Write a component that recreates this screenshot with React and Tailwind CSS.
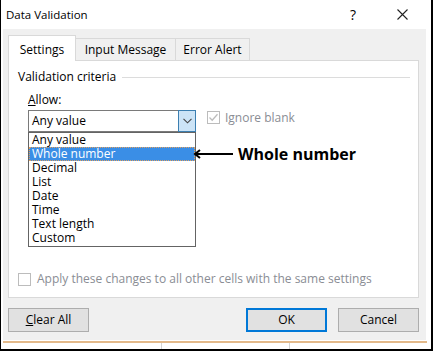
import { useState } from 'react'

const items = ['Any value', 'Whole number', 'Decimal', 'List', 'Date', 'Time', 'Text length', 'Custom']

function CheckBox({ checked }) {
  return (
    <span className="w-[13px] h-[13px] border border-[#bcbcbc] bg-white flex items-center justify-center shrink-0">
      {checked && (
        <svg width="11" height="11" viewBox="0 0 11 11" fill="none">
          <path d="M1.5 5.5 L4.2 8.2 L9.5 2.2" stroke="#bcbcbc" strokeWidth="1.3" />
        </svg>
      )}
    </span>
  )
}

export default function App() {
  const [selected] = useState(1)

  return (
    <div
      className="w-[433px] h-[351px] bg-white border-l border-r-2 border-b-2 border-black flex flex-col text-[12px] text-black overflow-hidden"
      style={{ fontFamily: '"Open Sans", "Noto Sans", sans-serif' }}
    >
      {/* title bar */}
      <div className="h-[29px] flex items-center shrink-0">
        <span className="pl-[5px] text-[11.5px]">Data Validation</span>
        <div className="ml-auto flex items-center pr-[23px]">
          <span className="text-[14px] leading-none">?</span>
          <svg className="ml-[41px]" width="11" height="11" viewBox="0 0 11 11">
            <path d="M0.5 0.5 L10.5 10.5 M10.5 0.5 L0.5 10.5" stroke="#222" strokeWidth="1.1" />
          </svg>
        </div>
      </div>

      {/* dialog body */}
      <div className="h-[311px] ml-[2px] mr-[5px] bg-[#f0f0f0] pl-[5px] pr-[7px] pt-[6px] flex flex-col">
        {/* tabs */}
        <div className="flex items-end h-[26px] -mb-px relative z-10">
          <div className="w-[68px] h-[26px] bg-white border border-b-0 border-[#d9d9d9] text-center pt-[6px] leading-[16px]">
            Settings
          </div>
          <div className="w-[101px] -ml-px h-[22px] mb-px bg-[#f0f0f0] border border-b-0 border-[#d9d9d9] text-center pt-[3px] leading-[16px]">
            Input Message
          </div>
          <div className="w-[75px] -ml-px h-[22px] mb-px bg-[#f0f0f0] border border-b-0 border-[#d9d9d9] text-center pt-[3px] leading-[16px]">
            Error Alert
          </div>
        </div>

        {/* panel */}
        <div className="h-[238px] bg-white border border-[#d9d9d9] pl-[9px] flex flex-col">
          <div className="mt-[8px] h-[16px] flex items-center">
            <span className="leading-[16px]">Validation criteria</span>
            <span className="flex-1 h-px bg-[#dcdcdc] ml-[6px] mr-[8px]" />
          </div>

          <div className="ml-[10px] mt-[7px] h-[16px] leading-[16px]">
            <span className="underline">A</span>llow:
          </div>

          <div className="ml-[10px] mt-[2px] flex items-start">
            <div className="w-[168px] h-[22px] flex">
              <div className="flex-1 border-y border-l border-[#7a7a7a] bg-white pl-[3px] leading-[20px]">Any value</div>
              <div className="w-[18px] border border-[#3c7fb1] bg-[#cce4f7] flex items-center justify-center">
                <svg width="9" height="6" viewBox="0 0 9 6">
                  <path d="M0.5 0.8 L4.5 4.8 L8.5 0.8" stroke="#444" strokeWidth="1.1" fill="none" />
                </svg>
              </div>
            </div>
            <div className="ml-[11px] mt-px flex items-center">
              <CheckBox checked />
              <span className="ml-[5px] leading-[13px] text-[#8a8d94]">Ignore blank</span>
            </div>
          </div>

          <div className="ml-[10px] flex items-start">
            <div className="w-[168px] border border-[#646464] bg-white pb-px">
              {items.map((item, i) => (
                <div
                  key={item}
                  className={
                    i === selected
                      ? 'h-[14px] leading-[12px] pl-[2px] bg-[#3a8ee6] text-white border border-dotted border-[#e0a060]'
                      : 'h-[14px] leading-[14px] pl-[3px]'
                  }
                >
                  {item}
                </div>
              ))}
            </div>
            <div className="-ml-[3px] mt-[12px] h-[20px] flex items-center">
              <svg width="40" height="10" viewBox="0 0 40 10">
                <path d="M2 5 L40 5" stroke="#000" strokeWidth="2" />
                <path d="M7 1 L2 5 L7 9" stroke="#000" strokeWidth="2" fill="none" />
              </svg>
              <span className="ml-[5px] text-[16px] font-bold leading-[20px]">Whole number</span>
            </div>
          </div>

          <div className="mt-[25px] h-[14px] flex items-center">
            <CheckBox />
            <span className="ml-[6px] text-[#8a8d94]">Apply these changes to all other cells with the same settings</span>
          </div>
        </div>

        {/* buttons */}
        <div className="mt-[10px] flex justify-between">
          <button className="w-[81px] h-[24px] bg-[#e1e1e1] border border-[#adadad]">
            <span className="underline">C</span>lear All
          </button>
          <div className="flex gap-[11px]">
            <button className="w-[81px] h-[24px] bg-[#e1e1e1] border-2 border-[#0078d7]">OK</button>
            <button className="w-[81px] h-[24px] bg-[#e1e1e1] border border-[#adadad]">Cancel</button>
          </div>
        </div>
      </div>

      {/* status strip of the sheet behind */}
      <div className="mt-px ml-[2px] mr-[4px] h-[8px] border-t-2 border-[#e3b98a] flex">
        <div className="w-[159px] border-r border-[#d4d4d4]" />
        <div className="w-[128px] border-r border-[#d4d4d4]" />
      </div>
    </div>
  )
}
